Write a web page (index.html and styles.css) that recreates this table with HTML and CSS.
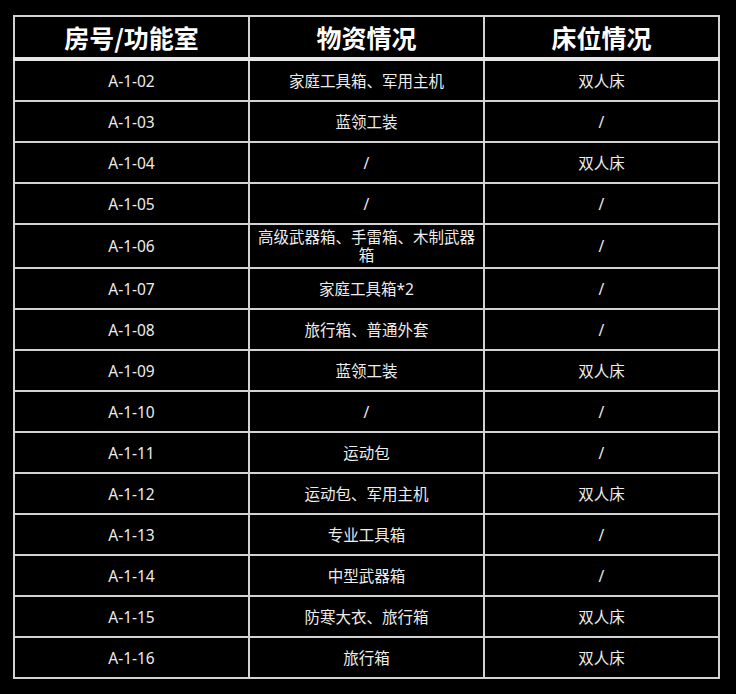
FILE: index.html
```html
<!DOCTYPE html>
<html lang="zh-CN">
<head>
<meta charset="utf-8">
<link rel="stylesheet" href="styles.css">
</head>
<body>
<div class="page">
<table class="grid">
<thead>
<tr><th>房号/功能室</th><th>物资情况</th><th>床位情况</th></tr>
</thead>
<tbody>
<tr><td>A-1-02</td><td>家庭工具箱、军用主机</td><td>双人床</td></tr>
<tr><td>A-1-03</td><td>蓝领工装</td><td>/</td></tr>
<tr><td>A-1-04</td><td>/</td><td>双人床</td></tr>
<tr><td>A-1-05</td><td>/</td><td>/</td></tr>
<tr class="tall"><td>A-1-06</td><td>高级武器箱、手雷箱、木制武器箱</td><td>/</td></tr>
<tr><td>A-1-07</td><td>家庭工具箱*2</td><td>/</td></tr>
<tr><td>A-1-08</td><td>旅行箱、普通外套</td><td>/</td></tr>
<tr><td>A-1-09</td><td>蓝领工装</td><td>双人床</td></tr>
<tr><td>A-1-10</td><td>/</td><td>/</td></tr>
<tr><td>A-1-11</td><td>运动包</td><td>/</td></tr>
<tr><td>A-1-12</td><td>运动包、军用主机</td><td>双人床</td></tr>
<tr><td>A-1-13</td><td>专业工具箱</td><td>/</td></tr>
<tr><td>A-1-14</td><td>中型武器箱</td><td>/</td></tr>
<tr><td>A-1-15</td><td>防寒大衣、旅行箱</td><td>双人床</td></tr>
<tr><td>A-1-16</td><td>旅行箱</td><td>双人床</td></tr>
</tbody>
</table>
</div>
</body>
</html>
```

FILE: styles.css
```css
html, body {
  margin: 0;
  padding: 0;
  background: #000;
}
body {
  width: 736px;
  height: 694px;
  overflow: hidden;
  font-family: "Noto Sans", "Noto Sans CJK SC", sans-serif;
}
.page {
  padding: 15px 0 0 13px;
}
.grid {
  border-collapse: collapse;
  table-layout: fixed;
  width: 707px;
  color: #ececec;
}
.grid th, .grid td {
  border: 2px solid #d2d2d2;
  text-align: center;
  vertical-align: middle;
  padding: 0 6px;
  width: 33.33%;
}
.grid th {
  height: 40px;
  font-family: "Noto Sans CJK SC", sans-serif;
  font-weight: 700;
  font-size: 25px;
  line-height: 30px;
  color: #fff;
  border-bottom: 4px solid #e6e6e6;
}
.grid td {
  height: 39px;
  font-size: 15.5px;
  line-height: 18px;
}
.grid tr.tall td {
  height: 42px;
}
```
